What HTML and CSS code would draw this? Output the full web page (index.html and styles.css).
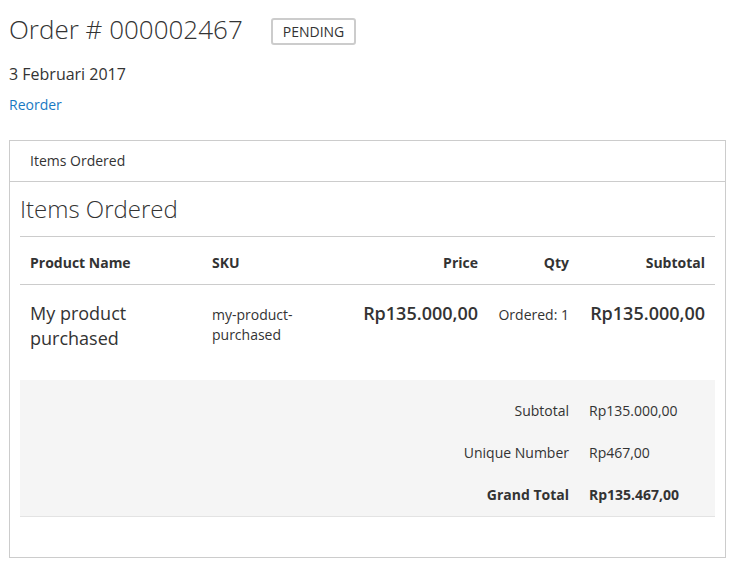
FILE: index.html
```html
<!DOCTYPE html>
<html lang="id">
<head>
<meta charset="utf-8">
<title>Order # 000002467</title>
<link rel="stylesheet" href="styles.css">
</head>
<body>
<div class="page">
  <div class="title-row">
    <h1 class="page-title">Order # 000002467</h1>
    <span class="order-status">Pending</span>
  </div>
  <div class="order-date">3 Februari 2017</div>
  <div class="order-actions"><a href="#" class="reorder">Reorder</a></div>

  <div class="order-details">
    <div class="tabs">
      <span class="tab-title">Items Ordered</span>
    </div>
    <div class="tab-content">
      <h2 class="items-caption">Items Ordered</h2>
      <table class="items">
        <thead>
          <tr>
            <th class="col-name">Product Name</th>
            <th class="col-sku">SKU</th>
            <th class="col-price">Price</th>
            <th class="col-qty">Qty</th>
            <th class="col-subtotal">Subtotal</th>
          </tr>
        </thead>
        <tbody>
          <tr>
            <td class="col-name"><strong class="product-name">My product purchased</strong></td>
            <td class="col-sku">my-product-<br>purchased</td>
            <td class="col-price"><span class="price">Rp135.000,00</span></td>
            <td class="col-qty">Ordered: 1</td>
            <td class="col-subtotal"><span class="price">Rp135.000,00</span></td>
          </tr>
        </tbody>
        <tfoot>
          <tr>
            <th colspan="4" class="mark">Subtotal</th>
            <td class="amount">Rp135.000,00</td>
          </tr>
          <tr>
            <th colspan="4" class="mark">Unique Number</th>
            <td class="amount">Rp467,00</td>
          </tr>
          <tr class="grand">
            <th colspan="4" class="mark">Grand Total</th>
            <td class="amount">Rp135.467,00</td>
          </tr>
        </tfoot>
      </table>
    </div>
  </div>
</div>
</body>
</html>
```

FILE: styles.css
```css
* { box-sizing: border-box; }
html, body { margin: 0; padding: 0; background: #fff; }
body {
  font-family: "Open Sans", "Liberation Sans", sans-serif;
  font-size: 14px;
  line-height: 20px;
  color: #333;
}
.page { padding: 0 8px 0 9px; }

.title-row {
  display: flex;
  align-items: flex-start;
  padding-top: 13px;
  height: 45px;
}
.page-title {
  margin: 0;
  font-size: 26px;
  font-weight: 300;
  line-height: 32px;
  color: #333;
}
.order-status {
  margin-left: 28px;
  margin-top: 5px;
  border: 2px solid #ccc;
  border-radius: 3px;
  height: 27px;
  padding: 0 10px;
  line-height: 23px;
  font-size: 14px;
  text-transform: uppercase;
  color: #333;
}
.order-date {
  margin-top: 17px;
  font-size: 16px;
  line-height: 24px;
}
.order-actions { margin-top: 9px; line-height: 20px; }
.reorder { color: #1979c3; text-decoration: none; }

.order-details {
  margin-top: 25px;
  border: 1px solid #ccc;
  height: 418px;
}
.tabs {
  height: 41px;
  border-bottom: 1px solid #ccc;
  padding: 10px 20px 0;
}
.tab-title { font-size: 14px; line-height: 20px; color: #333; }

.tab-content { padding: 0 10px; }
.items-caption {
  margin: 0;
  padding: 12px 0 12px;
  font-size: 24px;
  font-weight: 300;
  line-height: 30px;
  border-bottom: 1px solid #ccc;
}

table.items {
  width: 100%;
  border-collapse: collapse;
  table-layout: fixed;
}
.items th, .items td { padding: 0 10px; vertical-align: top; }
.items thead th {
  font-weight: 700;
  text-align: left;
  padding-top: 16px;
  padding-bottom: 11px;
  border-bottom: 1px solid #ccc;
}
.items .col-name { width: 182px; }
.items .col-sku { width: 150px; }
.items .col-price { width: 136px; text-align: right; }
.items .col-qty { width: 91px; text-align: right; }
.items .col-subtotal { text-align: right; }

.items tbody td { padding-top: 17px; padding-bottom: 29px; }
.product-name {
  font-weight: 400;
  font-size: 18px;
  line-height: 25px;
  display: block;
}
.items tbody td.col-name { padding-top: 16px; }
.items tbody .col-sku { padding-top: 20px; }
.price { font-size: 18px; font-weight: 600; line-height: 25px; }
.items tbody .col-price, .items tbody .col-subtotal { padding-top: 16px; padding-left: 0; padding-right: 10px; }
.items tbody .col-qty { padding-top: 20px; padding-left: 0; }

.items tfoot { background: #f5f5f5; }
.items tfoot th, .items tfoot td {
  padding-top: 11px;
  padding-bottom: 11px;
  font-weight: 400;
}
.items tfoot .mark { text-align: right; }
.items tfoot .amount { text-align: left; }
.items tfoot tr:first-child th, .items tfoot tr:first-child td { padding-top: 21px; }
.items tfoot tr:last-child th, .items tfoot tr:last-child td { padding-bottom: 11px; border-bottom: 1px solid #e3e3e3; }
.items tfoot .grand th, .items tfoot .grand td { font-weight: 700; }
```
